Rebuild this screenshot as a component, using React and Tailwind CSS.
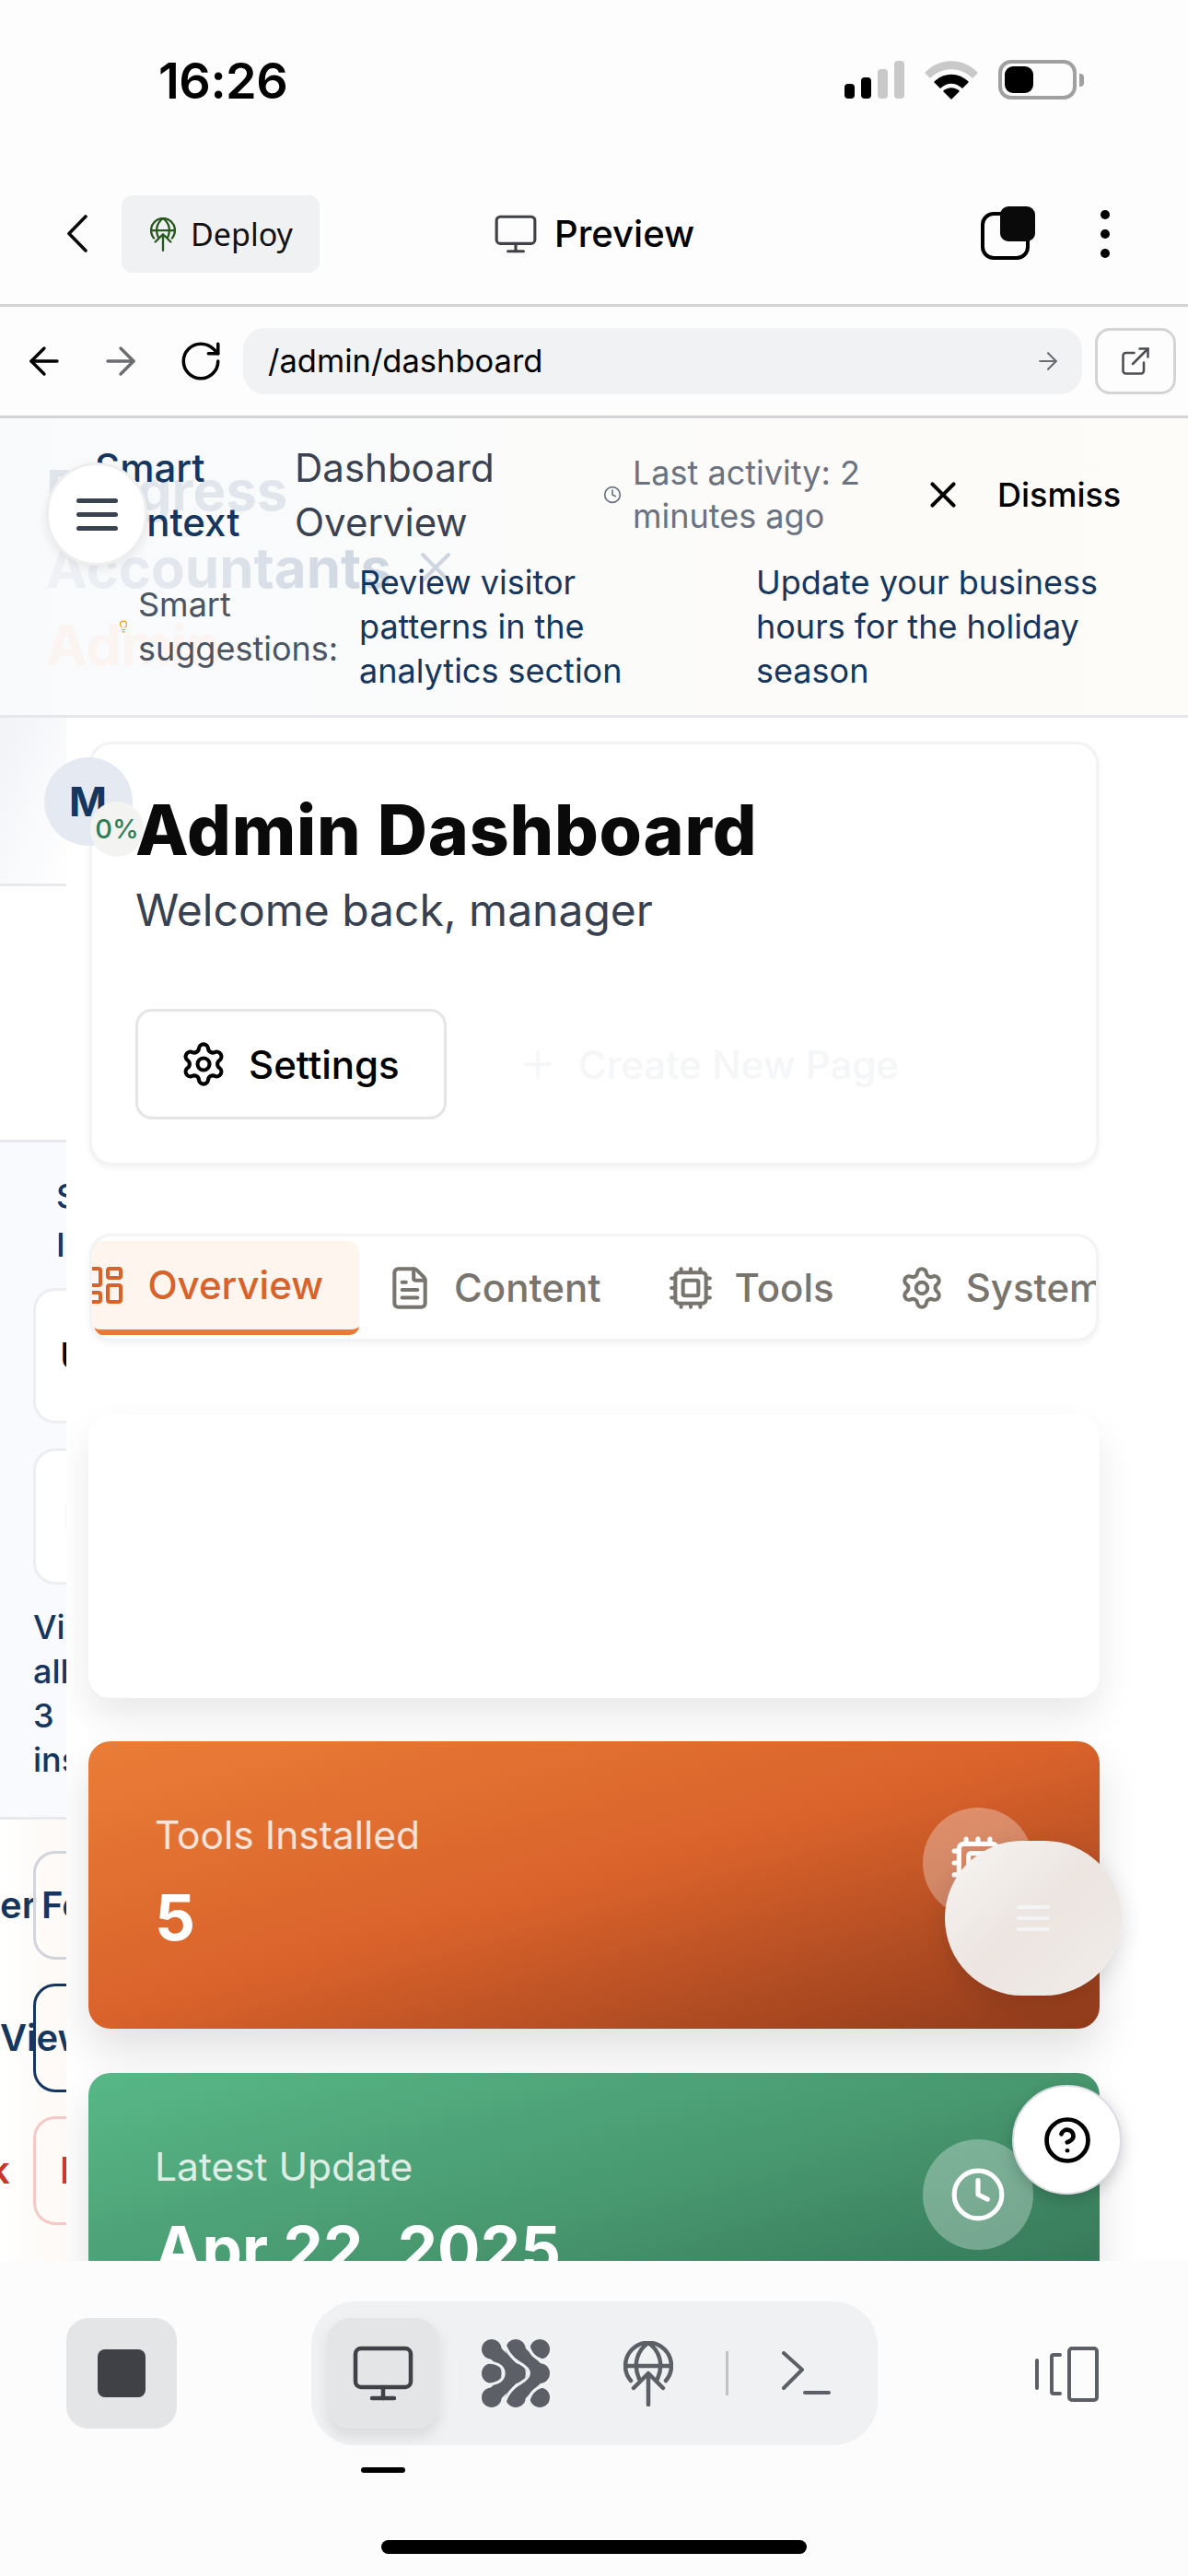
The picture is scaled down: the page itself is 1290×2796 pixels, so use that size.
import React from "react";
import { ArrowLeft, ArrowRight, RotateCw, ExternalLink, Monitor, X, Clock, Lightbulb, Settings, Plus, LayoutDashboard, FileText, Cpu, CircleHelp } from "lucide-react";

const inter = { fontFamily: "Inter, sans-serif" };

function GlobeUp({ className }) {
  return (
    <svg viewBox="0 0 54 71" fill="none" stroke="currentColor" strokeWidth="4.500" strokeLinecap="round" strokeLinejoin="round" className={className}>
      <path d="M8 43A25 25 0 1 1 46 43" />
      <path d="M2 27H52" />
      <path d="M17 41C10 25 15 10 27 2C39 10 44 25 37 41" />
      <path d="M27 69V36M11 51 27 35 43 51" />
    </svg>
  );
}

function Mesh({ className }) {
  const fg = "#5d5f66";
  const bg = "#f0f1f3";
  const pts = [10.5, 36, 61.5];
  return (
    <svg viewBox="0 0 72 72" fill="none" strokeLinecap="butt" className={className}>
      <path d="M10.500 10.500 36 36 10.500 61.500M36 10.500 61.500 36 36 61.500" stroke={fg} strokeWidth="16" strokeLinejoin="round" />
      {pts.map((x) => pts.map((y) => <circle key={x + "-" + y} cx={x} cy={y} r="10.500" fill={fg} />))}
      <path d="M23.500 -2C24 12 32 20 40 25C47 29 50 32 50 36C50 40 47 43 40 47C32 52 24 60 23.500 74" stroke={bg} strokeWidth="3" />
      <path d="M-2 23.500C10 23.500 23.500 25 23.500 36C23.500 47 10 48.500 -2 48.500" stroke={bg} strokeWidth="3" />
      <path d="M48.500 -2C48.500 14 56 23.500 74 23.500" stroke={bg} strokeWidth="3" />
      <path d="M48.500 74C48.500 58 56 48.500 74 48.500" stroke={bg} strokeWidth="3" />
    </svg>
  );
}

function DualPhone({ className }) {
  return (
    <svg viewBox="0 0 70 60" fill="none" stroke="currentColor" strokeWidth="4" strokeLinecap="round" strokeLinejoin="round" className={className}>
      <rect x="38" y="2" width="30" height="56" rx="3" />
      <path d="M28 9h-7a2 2 0 0 0-2 2v38a2 2 0 0 0 2 2h7" />
      <path d="M3 15v30" />
    </svg>
  );
}

function Signal() {
  return (
    <div className="flex items-end gap-[7px] h-[41px]">
      <div className="w-[11px] h-[16px] rounded-[4px] bg-black" />
      <div className="w-[11px] h-[23px] rounded-[4px] bg-black" />
      <div className="w-[11px] h-[32px] rounded-[4px] bg-[#c9c9c9]" />
      <div className="w-[11px] h-[41px] rounded-[4px] bg-[#c9c9c9]" />
    </div>
  );
}

function Wifi() {
  return (
    <svg viewBox="0 0 58 42" className="w-[58px] h-[42px]">
      <path d="M0 13C16 -4 42 -4 58 13L52 19C39 6 19 6 6 19Z" fill="#c9c9c9" />
      <path d="M10 23C21 12 37 12 48 23L41 30C33 23 25 23 17 30Z" fill="#000" />
      <path d="M20 33C25 28 33 28 38 33L29 42Z" fill="#000" />
    </svg>
  );
}

function Battery() {
  return (
    <div className="flex items-center">
      <div className="w-[85px] h-[43px] rounded-[14px] border-[4px] border-[#a0a0a0] px-[3px] py-[3px]">
        <div className="w-[31px] h-full rounded-[9px] bg-black" />
      </div>
      <div className="ml-[3px] w-[5px] h-[14px] rounded-r-[4px] bg-[#a0a0a0]" />
    </div>
  );
}

function Lines({ w, h, gap, color }) {
  const bar = `${w} ${h} ${color} rounded-full`;
  return (
    <div className={`flex flex-col ${gap}`}>
      <div className={bar} />
      <div className={bar} />
      <div className={bar} />
    </div>
  );
}

function Sidebar() {
  return (
    <div className="w-[72px] shrink-0 overflow-hidden flex flex-col" style={inter}>
      <div className="h-[183px] shrink-0 border-b-[3px] border-[#e8e9ec] bg-gradient-to-br from-[#f1f3f7] to-[#ffffff]" />
      <div className="h-[278px] shrink-0 border-b-[3px] border-[#e8e9ec] bg-white" />
      <div className="h-[735px] shrink-0 border-b-[3px] border-[#e8e9ec] bg-[#f8fafd] pl-[36px] w-[400px]">
        <div className="pl-[25px] pt-[32px] text-[36px] leading-[53px] font-medium text-[#14365f] h-[158px]">Smart<br />Insights</div>
        <div className="h-[147px] w-[300px] rounded-[24px] border-[3px] border-[#eceef1] bg-white pl-[26px] flex items-center text-[40px] font-medium text-black">Update</div>
        <div className="mt-[27px] h-[148px] w-[300px] rounded-[24px] border-[3px] border-[#eceef1] bg-white pl-[30px] flex items-center text-[40px] font-medium text-black">Review</div>
        <div className="mt-[22px] w-[70px] text-[36px] leading-[48px] font-medium text-[#14365f]">View<br />all<br />3<br />insights</div>
      </div>
      <div className="flex-1 bg-gradient-to-r from-[#ffffff] to-[#fdf9f5] pt-[34px] flex flex-col gap-[26px] w-[72px]">
        <div className="flex h-[118px] items-center">
          <span className="w-[36px] text-[40px] font-semibold text-[#14365f] text-right shrink-0 pr-[3px] leading-none">er</span>
          <div className="w-[200px] shrink-0 h-[118px] rounded-[24px] border-[3px] border-[#d1d5db] pl-[6px] flex items-center text-[40px] font-semibold text-[#14365f]">Feedback</div>
        </div>
        <div className="flex h-[118px] items-center">
          <div className="ml-[36px] w-[200px] shrink-0 h-[118px] rounded-[24px] border-[3px] border-[#14365f] flex items-center text-[40px] font-semibold text-[#14365f]">
            <span className="-ml-[39px]">View</span>
          </div>
        </div>
        <div className="flex h-[118px] items-center">
          <span className="w-[36px] shrink-0 text-[40px] font-semibold text-[#c8372d] leading-none -ml-[12px]">k</span>
          <div className="ml-[12px] w-[200px] shrink-0 h-[118px] rounded-[24px] border-[3px] border-[#f6c9c7] pl-[26px] flex items-center text-[40px] font-semibold text-[#c8372d]">Issues</div>
        </div>
      </div>
    </div>
  );
}

function Tab({ icon: Icon, label, pad }) {
  return (
    <div className={`flex items-center gap-[23px] h-[101px] shrink-0 text-[#78746e] ${pad}`}>
      <Icon className="w-[50px] h-[50px] shrink-0" strokeWidth={1.95} />
      <span className="text-[42px] font-medium whitespace-nowrap">{label}</span>
    </div>
  );
}

function StatCard({ gradient, label, value, icon: Icon }) {
  return (
    <div className={`${gradient} h-[312px] w-[1098px] shrink-0 rounded-[24px] shadow-[0_24px_48px_rgba(0,0,0,0.12)] pl-[72px] pr-[72px] pt-[74px] flex justify-between items-start`}>
      <div>
        <div className="text-[42.500px] leading-[56px] text-white/80">{label}</div>
        <div className="mt-[19px] text-[69px] leading-[84px] font-bold text-white whitespace-nowrap">{value}</div>
      </div>
      <div className="w-[120px] h-[120px] shrink-0 -mt-[2px] rounded-full bg-white/30 flex items-center justify-center text-white">
        <Icon className="w-[62px] h-[62px]" strokeWidth={2} />
      </div>
    </div>
  );
}

export default function App() {
  return (
    <div className="w-[1290px] h-[2796px] bg-[#fdfdfd] flex flex-col overflow-hidden relative text-black" style={inter}>
      <div className="h-[212px] shrink-0 flex justify-between items-start pl-[172px] pr-[113px] pt-[55px]">
        <div className="text-[54px] leading-[66px] font-semibold tracking-[-0.5px]">16:26</div>
        <div className="flex items-center gap-[22px] pt-[10px]">
          <Signal />
          <Wifi />
          <Battery />
        </div>
      </div>

      <div className="h-[121px] shrink-0 flex items-start pl-[73px] pr-[85px] border-b-[3px] border-[#d4d4d6]">
        <svg viewBox="0 0 22 41" fill="none" stroke="#0a0a0a" strokeWidth="3.600" strokeLinecap="round" strokeLinejoin="round" className="w-[22px] h-[41px] mt-[21px]">
          <path d="M20 2 2 20.500 20 39" />
        </svg>
        <div className="ml-[37px] w-[215px] h-[84px] rounded-[12px] bg-[#f0f1f3] flex items-center pl-[31px] gap-[16px]">
          <GlobeUp className="w-[28px] h-[37px] text-[#27581f]" />
          <span className="text-[34px] text-[#111]" style={{ fontFamily: "'Noto Sans', sans-serif" }}>Deploy</span>
        </div>
        <div className="ml-[188px] flex items-center gap-[17px] h-[84px]">
          <Monitor className="w-[50px] h-[50px] text-[#3f4147]" strokeWidth={1.5} />
          <span className="text-[40px] font-medium">Preview</span>
        </div>
        <div className="ml-auto relative w-[59px] h-[58px] mt-[12px]">
          <div className="absolute left-0 bottom-0 w-[53px] h-[52px] rounded-[14px] border-[4px] border-black" />
          <div className="absolute right-0 top-0 w-[38px] h-[38px] rounded-[9px] bg-[#0a0a0b]" />
        </div>
        <div className="ml-[71px] flex flex-col gap-[11px] mt-[16px]">
          <div className="w-[10px] h-[10px] rounded-full bg-black" />
          <div className="w-[10px] h-[10px] rounded-full bg-black" />
          <div className="w-[10px] h-[10px] rounded-full bg-black" />
        </div>
      </div>

      <div className="h-[121px] shrink-0 flex items-center pl-[24px] pr-[13px] border-b-[3px] border-[#d4d4d6]">
        <ArrowLeft className="w-[48px] h-[48px]" strokeWidth={1.7} />
        <ArrowRight className="w-[48px] h-[48px] ml-[35px] text-[#6b6d73]" strokeWidth={1.7} />
        <RotateCw className="w-[50px] h-[50px] ml-[38px]" strokeWidth={1.7} />
        <div className="ml-[21px] flex-1 h-[72px] rounded-[24px] bg-[#f1f2f4] flex items-center justify-between pl-[27px] pr-[22px]">
          <span className="text-[34.500px]">/admin/dashboard</span>
          <ArrowRight className="w-[30px] h-[30px] text-[#6b6d73]" strokeWidth={1.7} />
        </div>
        <div className="ml-[14px] w-[88px] h-[72px] rounded-[16px] border-[3px] border-[#d4d4d6] flex items-center justify-center">
          <ExternalLink className="w-[36px] h-[36px] text-[#4b4d53]" strokeWidth={1.7} />
        </div>
      </div>

      <div className="h-[325px] shrink-0 border-b-[3px] border-[#e5e7eb] bg-gradient-to-r from-[#f8fafc] to-[#fefcf8] relative pl-[103px] pr-[70px] pt-[24px]">
        <div className="absolute left-[50px] top-[36px] text-[60px] leading-[84px] font-bold pointer-events-none whitespace-nowrap">
          <div className="text-[#e1e6ed]">Progress</div>
          <div className="flex items-center">
            <span className="bg-gradient-to-r from-[#f0f2f6] to-[#ccd5e0] bg-clip-text text-transparent">Accountants</span>
            <X className="ml-[20px] w-[56px] h-[56px] text-[#ccd5e0]" strokeWidth={1.7} />
          </div>
          <div className="text-[#fbf4f0]">Admin</div>
        </div>
        <div className="relative flex items-center">
          <div className="w-[217px] shrink-0 text-[42px] leading-[59px] font-medium text-[#14365f]">Smart<br />Context</div>
          <div className="w-[335px] shrink-0 text-[42px] leading-[59px] text-[#3a4252]">Dashboard<br />Overview</div>
          <Clock className="w-[20px] h-[20px] text-[#6b7280] shrink-0" strokeWidth={2} />
          <div className="ml-[12px] w-[314px] shrink-0 text-[36px] leading-[47px] text-[#6b7280]">Last activity: 2<br />minutes ago</div>
          <X className="w-[46px] h-[46px] shrink-0" strokeWidth={2.1} />
          <span className="ml-[36px] text-[36px] font-medium">Dismiss</span>
        </div>
        <div className="relative flex items-center mt-[12px] pl-[24px]">
          <Lightbulb className="w-[14px] h-[18px] text-[#f59e0b] shrink-0" strokeWidth={2} />
          <div className="ml-[9px] w-[240px] shrink-0 text-[36px] leading-[48px] text-[#4b5563]">Smart suggestions:</div>
          <div className="w-[431px] shrink-0 text-[36px] leading-[48px] text-[#14365f]">Review visitor<br />patterns in the<br />analytics section</div>
          <div className="text-[36px] leading-[48px] text-[#14365f]">Update your business<br />hours for the holiday<br />season</div>
        </div>
      </div>

      <div className="flex-1 min-h-0 flex">
        <Sidebar />
        <div className="flex-1 min-w-0 bg-[#ffffff] overflow-hidden pl-[24px] pt-[26px] flex flex-col relative">
          <div className="ml-[1px] w-[1096px] h-[460px] shrink-0 rounded-[24px] border-[3px] border-[#f2f3f5] shadow-[0_3px_6px_rgba(0,0,0,0.05)] bg-white pl-[47px] pt-[43px]">
            <h1 className="text-[75px] leading-[100px] font-extrabold text-[#0a0a0a] tracking-[0.8px]">Admin Dashboard</h1>
            <div className="mt-[5px] text-[48px] leading-[64px] text-[#374151]">Welcome back, manager</div>
            <div className="flex items-center mt-[75px]">
              <div className="w-[338px] h-[120px] rounded-[18px] border-[3px] border-[#e5e5e5] flex items-center pl-[45px] gap-[23px]">
                <Settings className="w-[52px] h-[52px]" strokeWidth={1.9} />
                <span className="text-[42px] font-medium">Settings</span>
              </div>
              <Plus className="ml-[77px] w-[44px] h-[44px] text-[#f5f6f8]" strokeWidth={2} />
              <span className="ml-[22px] text-[42px] font-medium text-[#f5f6f8]">Create New Page</span>
            </div>
          </div>

          <div className="mt-[74px] ml-[1px] w-[1096px] h-[117px] shrink-0 rounded-[24px] border-[3px] border-[#f2f3f5] shadow-[0_3px_6px_rgba(0,0,0,0.05)] bg-white flex items-center overflow-hidden">
            <div className="flex items-center gap-[23px] h-[102px] w-[290px] shrink-0 rounded-[10px] border-b-[6px] border-[#e97a36] bg-[#fef6ee] text-[#d9622b] pr-[39px] justify-end">
              <LayoutDashboard className="w-[48px] h-[48px] shrink-0" strokeWidth={2} />
              <span className="text-[42px] font-medium whitespace-nowrap">Overview</span>
            </div>
            <Tab icon={FileText} label="Content" pad="pl-[30px]" />
            <Tab icon={Cpu} label="Tools" pad="pl-[72px]" />
            <Tab icon={Settings} label="System" pad="pl-[70px]" />
          </div>

          <div className="mt-[79px] w-[1098px] h-[308px] shrink-0 rounded-[24px] bg-white shadow-[0_20px_40px_rgba(0,0,0,0.09)]" />

          <div className="mt-[47px] flex flex-col gap-[48px]">
            <StatCard gradient="bg-gradient-to-br from-[#ea7d37] via-[#d9622b] to-[#8f3a1b]" label="Tools Installed" value="5" icon={Cpu} />
            <StatCard gradient="bg-gradient-to-br from-[#58b887] via-[#47966e] to-[#2e6b50]" label="Latest Update" value="Apr 22, 2025" icon={Clock} />
          </div>

          <div className="absolute left-[954px] top-[1219px] w-[192px] h-[168px] rounded-[84px] bg-gradient-to-br from-[#f7f5f3] via-[#ece5e0] to-[#f1edea] shadow-[0_8px_24px_rgba(0,0,0,0.12)] flex items-center justify-center">
            <Lines w="w-[36px]" h="h-[4px]" gap="gap-[8px]" color="bg-[#f3f4f6]" />
          </div>
          <div className="absolute left-[1027px] top-[1484px] w-[119px] h-[119px] rounded-full bg-white border-[2px] border-[#dcdce4] shadow-[0_6px_16px_rgba(0,0,0,0.18)] flex items-center justify-center">
            <CircleHelp className="w-[54px] h-[54px] text-black" strokeWidth={2.1} />
          </div>
        </div>
      </div>

      <div className="h-[342px] shrink-0 bg-[#fcfcfc] flex flex-col z-10">
        <div className="flex items-start pl-[72px] pt-[44px]">
          <div className="w-[120px] h-[120px] mt-[18px] rounded-[24px] bg-[#e4e5e7] flex items-center justify-center">
            <div className="w-[52px] h-[52px] rounded-[8px] bg-[#3f4147]" />
          </div>
          <div className="ml-[146px] w-[615px] h-[156px] rounded-[48px] bg-[#f0f1f3] flex items-center pl-[18px]">
            <div className="w-[120px] h-[120px] shrink-0 rounded-[24px] bg-[#e4e5e7] shadow-[0_8px_16px_rgba(0,0,0,0.10)] flex items-center justify-center">
              <Monitor className="w-[72px] h-[72px] text-[#3f4147]" strokeWidth={1.5} />
            </div>
            <Mesh className="ml-[47px] w-[74px] h-[74px] shrink-0" />
            <GlobeUp className="ml-[80px] w-[54px] h-[71px] shrink-0 text-[#5d5f66]" />
            <div className="ml-[57px] w-[3px] h-[48px] shrink-0 bg-[#c2c3c6]" />
            <svg viewBox="0 0 53 48" fill="none" stroke="#5d5f66" strokeWidth="4" strokeLinecap="round" strokeLinejoin="round" className="ml-[58px] w-[53px] h-[48px] shrink-0">
              <path d="M2 2 22 20 2 40" />
              <path d="M25 45H51" />
            </svg>
          </div>
          <DualPhone className="ml-[170px] mt-[49px] w-[70px] h-[60px] text-[#5d5f66]" />
        </div>
        <div className="ml-[392px] mt-[24px] w-[48px] h-[6px] rounded-full bg-black" />
        <div className="ml-[414px] mt-[73px] w-[462px] h-[15px] rounded-full bg-black" />
      </div>

      <div className="absolute left-[48px] top-[822px] w-[96px] h-[96px] rounded-full bg-[#e2e7ef]/90 flex items-center pl-[27px] text-[44px] font-bold text-[#14365f]">M</div>
      <div className="absolute left-[98px] top-[870px] w-[58px] h-[60px] rounded-full bg-[#f3f4f2] flex items-center justify-center text-[29px] font-medium text-[#2e7d57]">0%</div>

      <div className="absolute left-[50px] top-[502px] w-[110px] h-[112px] rounded-full bg-white border-[3px] border-[#eeeeef] shadow-[0_4px_12px_rgba(0,0,0,0.08)] flex items-center justify-center">
        <Lines w="w-[45px]" h="h-[5px]" gap="gap-[10px]" color="bg-[#3a4252]" />
      </div>
    </div>
  );
}
